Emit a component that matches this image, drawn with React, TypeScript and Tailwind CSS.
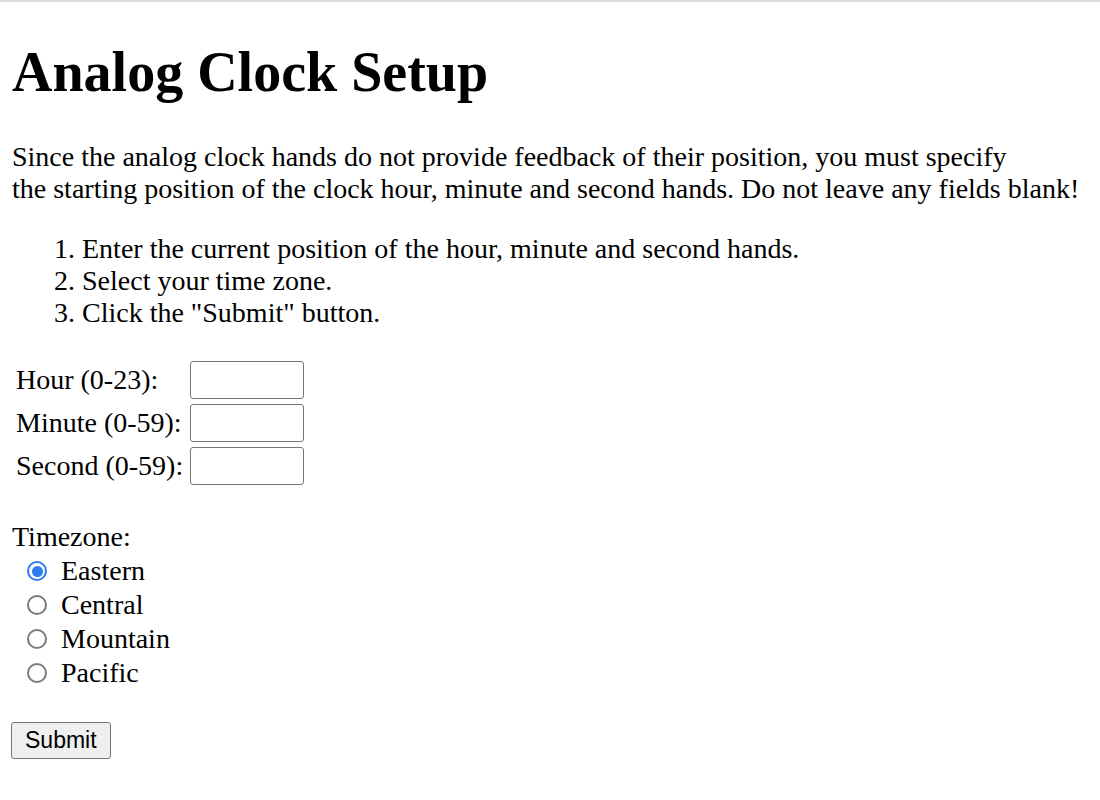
import { useState } from "react";

const zones = ["Eastern", "Central", "Mountain", "Pacific"];

const fields = [
  { label: "Hour (0-23):", key: "hour" },
  { label: "Minute (0-59):", key: "minute" },
  { label: "Second (0-59):", key: "second" },
];

export default function App() {
  const [zone, setZone] = useState("Eastern");

  return (
    <div className="min-h-[800px] bg-white text-black font-['Liberation_Serif','Times_New_Roman',serif]">
      <div className="h-[2px] bg-[#dadada]" />
      <div className="px-3">
        <h1 className="mt-[38px] text-[56px] leading-[64px] font-bold">Analog Clock Setup</h1>

        <p className="mt-[37px] text-[28px] leading-[32px]">
          Since the analog clock hands do not provide feedback of their position, you must specify
          <br />
          the starting position of the clock hour, minute and second hands. Do not leave any fields blank!
        </p>

        <ol className="mt-[28px] list-decimal pl-[70px] text-[28px] leading-[32px]">
          <li>Enter the current position of the hour, minute and second hands.</li>
          <li>Select your time zone.</li>
          <li>Click the "Submit" button.</li>
        </ol>

        <form className="mt-[29px]" onSubmit={(e) => e.preventDefault()}>
          <div className="flex flex-col">
            {fields.map((f) => (
              <div key={f.key} className="flex h-[43px] items-center text-[28px] leading-[32px]">
                <label className="w-[178px] pl-1">{f.label}</label>
                <input
                  type="text"
                  className="h-[38px] w-[114px] rounded-[3px] border border-[#767676] bg-white px-1 text-[22px] outline-none"
                />
              </div>
            ))}
          </div>

          <div className="mt-[34px] text-[28px] leading-[32px]">Timezone:</div>
          <div className="mt-px flex flex-col">
            {zones.map((z) => (
              <label
                key={z}
                className="flex h-[34px] cursor-pointer items-center text-[28px] leading-[32px]"
                onClick={() => setZone(z)}
              >
                <span
                  className={
                    z === zone
                      ? "ml-[15px] mr-[14px] flex h-5 w-5 items-center justify-center rounded-full border-2 border-[#2f7cf0] bg-white"
                      : "ml-[15px] mr-[14px] h-5 w-5 rounded-full border-2 border-[#7a7a7a] bg-white"
                  }
                >
                  {z === zone && <span className="h-[11px] w-[11px] rounded-full bg-[#2f7cf0]" />}
                </span>
                <span>{z}</span>
              </label>
            ))}
          </div>

          <button
            type="submit"
            className="-ml-px mt-[32px] h-[37px] rounded-[3px] border border-[#767676] bg-[#efefef] px-[13px] font-['Liberation_Sans',Arial,sans-serif] text-[23px] leading-none text-black"
          >
            Submit
          </button>
        </form>
      </div>
    </div>
  );
}
